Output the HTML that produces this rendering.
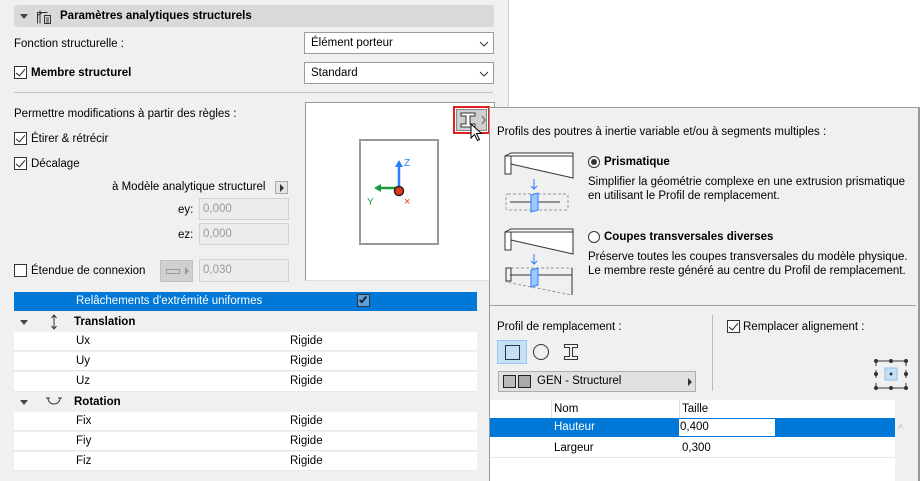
<!DOCTYPE html>
<html><head><meta charset="utf-8"><style>
*{margin:0;padding:0;box-sizing:border-box}
body{width:920px;height:481px;overflow:hidden;background:#fff;font-family:"Liberation Sans",sans-serif;font-size:11.5px;line-height:17px;color:#000;position:relative}
.a{position:absolute;white-space:nowrap}
.cb{position:absolute;width:13px;height:13px;border:1px solid #333;background:#fff}
.cb.on::after{content:"";position:absolute;left:3px;top:0px;width:4px;height:8px;border:solid #222;border-width:0 1.5px 1.5px 0;transform:rotate(40deg)}
.dd{position:absolute;background:#fff;border:1px solid #9a9a9a}
.fld{position:absolute;background:#ececec;border:1px solid #d2d2d2;color:#9a9a9a;padding:2px 3px}
.row{position:absolute;left:14px;width:463px;height:19px;background:#fff;border-bottom:1px solid #e8e8e8}
.b{font-weight:bold}
</style></head><body>
<div class="a" style="left:0;top:0;width:509px;height:481px;background:#f0f0f0;border-right:1px solid #d0d0d0"></div>
<div class="a" style="left:14px;top:5px;width:480px;height:22px;background:#d9d9d9;border-radius:3px"></div>
<div class="a" style="left:20px;top:14px;width:0;height:0;border-left:4px solid transparent;border-right:4px solid transparent;border-top:5px solid #444"></div>
<svg class="a" style="left:36px;top:9px" width="16" height="16" viewBox="0 0 16 16" fill="none" stroke="#333" stroke-width="1"><path d="M1.5 3.5h10M1.5 3.5v11M4 1.5v13M1.5 6.5l5-3M8.5 6.5h6v8h-6z M10 9h3M10 11h3M10 13h3"/></svg>
<div class="a b" style="left:60px;top:8px">Paramètres analytiques structurels</div>
<div class="a" style="left:14px;top:36px">Fonction structurelle :</div>
<div class="dd" style="left:304px;top:32px;width:190px;height:22px"><span class="a" style="left:6px;top:2px">Élément porteur</span><svg class="a" style="right:4px;top:8px" width="10" height="6"><path d="M1 1l4 4 4-4" stroke="#333" fill="none"/></svg></div>
<div class="cb on" style="left:14px;top:66px"></div>
<div class="a b" style="left:31px;top:65px">Membre structurel</div>
<div class="dd" style="left:304px;top:62px;width:190px;height:22px"><span class="a" style="left:6px;top:2px">Standard</span><svg class="a" style="right:4px;top:8px" width="10" height="6"><path d="M1 1l4 4 4-4" stroke="#333" fill="none"/></svg></div>
<div class="a" style="left:14px;top:92px;width:479px;height:1px;background:#c4c4c4"></div>
<div class="a" style="left:14px;top:106px">Permettre modifications à partir des règles :</div>
<div class="cb on" style="left:14px;top:132px"></div><div class="a" style="left:31px;top:131px">Étirer &amp; rétrécir</div>
<div class="cb on" style="left:14px;top:157px"></div><div class="a" style="left:31px;top:156px">Décalage</div>
<div class="a" style="left:112px;top:179px">à Modèle analytique structurel</div>
<div class="a" style="left:275px;top:181px;width:13px;height:13px;border:1px solid #aaa;background:#e4e4e4"><div class="a" style="left:4px;top:2px;border-top:4px solid transparent;border-bottom:4px solid transparent;border-left:4px solid #333"></div></div>
<div class="a" style="left:178px;top:202px">ey:</div><div class="fld" style="left:199px;top:198px;width:90px;height:22px">0,000</div>
<div class="a" style="left:178px;top:227px">ez:</div><div class="fld" style="left:199px;top:223px;width:90px;height:22px">0,000</div>
<div class="cb" style="left:14px;top:264px"></div><div class="a" style="left:31px;top:263px">Étendue de connexion</div>
<div class="a" style="left:160px;top:260px;width:33px;height:22px;background:#d0d0d0;border:1px solid #c0c0c0"><div class="a" style="left:5px;top:8px;width:14px;height:5px;border:1px solid #999"></div><div class="a" style="left:24px;top:6px;border-top:4px solid transparent;border-bottom:4px solid transparent;border-left:4px solid #999"></div></div>
<div class="fld" style="left:199px;top:259px;width:90px;height:23px">0,030</div>
<div class="a" style="left:305px;top:102px;width:190px;height:179px;background:#fff;border:1px solid #9a9a9a;border-bottom-color:#e0e0e0"></div>
<div class="a" style="left:359px;top:139px;width:80px;height:106px;border:2px solid #999;background:#fff"></div>
<svg class="a" style="left:365px;top:155px" width="50" height="52"><path d="M34 33V10" stroke="#2a7bff" stroke-width="2.5"/><path d="M30 12l4-7 4 7z" fill="#2a7bff"/><path d="M34 33H15" stroke="#1a9a3a" stroke-width="2.5"/><path d="M16 29l-7 4 7 4z" fill="#1a9a3a"/><circle cx="34" cy="36" r="4.5" fill="#e8391f" stroke="#222" stroke-width="1.5"/><text x="39" y="11" font-size="10" fill="#2a7bff" font-family="Liberation Sans">Z</text><text x="2" y="50" font-size="10" fill="#1a9a3a" font-family="Liberation Sans">Y</text><text x="39" y="50" font-size="11" fill="#e8391f" font-family="Liberation Sans">×</text></svg>
<div class="a" style="left:453px;top:106px;width:37px;height:28px;border:2px solid #e0201e"></div>
<div class="a" style="left:456px;top:109px;width:31px;height:22px;background:#cfcfcf;border:1px solid #888"></div>
<svg class="a" style="left:459px;top:111px" width="28" height="18"><path d="M2 2h14v3h-5v8h5v3H2v-3h5V5H2z" fill="#fff" stroke="#333"/><path d="M23 5l3 4-3 4" stroke="#555" fill="none"/></svg>
<svg class="a" style="left:470px;top:123px" width="14" height="20"><path d="M1 1v14l3.5-3.5 3 6 2-1-3-6h5z" fill="#fff" stroke="#000"/></svg>
<div class="a" style="left:14px;top:292px;width:463px;height:19px;background:#0078d7"></div>
<div class="a" style="left:76px;top:293px;color:#fff">Relâchements d'extrémité uniformes</div>
<div class="a" style="left:357px;top:294px;width:13px;height:13px;border:1px solid #333;background:#5aa0e0"><div class="a" style="left:3px;top:0;width:4px;height:8px;border:solid #222;border-width:0 2px 2px 0;transform:rotate(40deg)"></div></div>
<div class="a" style="left:14px;top:311px;width:463px;height:21px;background:#f0f0f0"></div>
<div class="a" style="left:20px;top:320px;border-left:4px solid transparent;border-right:4px solid transparent;border-top:5px solid #444"></div>
<svg class="a" style="left:50px;top:314px" width="8" height="16"><path d="M4 1v14M1.5 4L4 1l2.5 3M1.5 12L4 15l2.5-3" stroke="#333" fill="none"/></svg>
<div class="a b" style="left:74px;top:314px">Translation</div>
<div class="row" style="top:332px"><span class="a" style="left:62px;top:1px">Ux</span><span class="a" style="left:276px;top:1px">Rigide</span></div>
<div class="row" style="top:352px"><span class="a" style="left:62px;top:1px">Uy</span><span class="a" style="left:276px;top:1px">Rigide</span></div>
<div class="row" style="top:372px;height:20px"><span class="a" style="left:62px;top:1px">Uz</span><span class="a" style="left:276px;top:1px">Rigide</span></div>
<div class="a" style="left:20px;top:400px;border-left:4px solid transparent;border-right:4px solid transparent;border-top:5px solid #444"></div>
<svg class="a" style="left:45px;top:395px" width="18" height="12"><path d="M3 3a6 6 0 1 0 12 0" stroke="#333" fill="none"/><path d="M1 3h4M13 3h4" stroke="#333"/></svg>
<div class="a b" style="left:74px;top:394px">Rotation</div>
<div class="row" style="top:412px"><span class="a" style="left:62px;top:1px">Fix</span><span class="a" style="left:276px;top:1px">Rigide</span></div>
<div class="row" style="top:432px"><span class="a" style="left:62px;top:1px">Fiy</span><span class="a" style="left:276px;top:1px">Rigide</span></div>
<div class="row" style="top:452px"><span class="a" style="left:62px;top:1px">Fiz</span><span class="a" style="left:276px;top:1px">Rigide</span></div>
<!-- popup -->
<div class="a" style="left:489px;top:107px;width:431px;height:374px;background:#f0f0f0;border-left:1px solid #999;border-top:1px solid #999;border-right:2px solid #999"></div>
<div class="a" style="left:497px;top:124px">Profils des poutres à inertie variable et/ou à segments multiples :</div>
<svg class="a" style="left:503px;top:150px" width="72" height="145" fill="none" stroke="#333"><path d="M2 6l6-3h62v25L8 14v10H2z" fill="#fff"/><path d="M2 6h6v18M8 6h62"/><path d="M8 14v10"/><path d="M31 29v10M28 36l3 3 3-3" stroke="#2a7bff"/><rect x="3" y="44" width="62" height="16" rx="2" stroke="#999" stroke-dasharray="3 2"/><path d="M7 52h50"/><path d="M28 45l7-2v17l-7 2z" fill="#9cc8ff" stroke="#2a7bff"/><path d="M2 82l6-3h62v25L8 90v10H2z" fill="#fff"/><path d="M2 82h6v18M8 82h62"/><path d="M31 104v10M28 111l3 3 3-3" stroke="#2a7bff"/><path d="M3 118h66v27L3 132z" stroke="#999" stroke-dasharray="3 2"/><path d="M3 118v13h5v-13zM69 118v27"/><path d="M7 125h62"/><path d="M28 120l7-2v17l-7 2z" fill="#9cc8ff" stroke="#2a7bff"/></svg>
<div class="a" style="left:588px;top:156px;width:12px;height:12px;border:1px solid #333;border-radius:50%;background:#fff"><div class="a" style="left:2px;top:2px;width:6px;height:6px;border-radius:50%;background:#333"></div></div>
<div class="a b" style="left:604px;top:154px">Prismatique</div>
<div class="a" style="left:588px;top:175px;line-height:14px">Simplifier la géométrie complexe en une extrusion prismatique<br>en utilisant le Profil de remplacement.</div>
<div class="a" style="left:588px;top:231px;width:12px;height:12px;border:1px solid #333;border-radius:50%;background:#fff"></div>
<div class="a b" style="left:604px;top:229px">Coupes transversales diverses</div>
<div class="a" style="left:588px;top:250px;line-height:14px">Préserve toutes les coupes transversales du modèle physique.<br>Le membre reste généré au centre du Profil de remplacement.</div>
<div class="a" style="left:490px;top:305px;width:426px;height:1px;background:#a0a0a0"></div>
<div class="a" style="left:497px;top:319px">Profil de remplacement :</div>
<div class="a" style="left:712px;top:315px;width:1px;height:76px;background:#bbb"></div>
<div class="cb on" style="left:727px;top:320px"></div><div class="a" style="left:743px;top:319px">Remplacer alignement :</div>
<div class="a" style="left:497px;top:340px;width:30px;height:24px;background:#c5dff5;border:1px solid #99c7ee"><div class="a" style="left:7px;top:4px;width:15px;height:15px;border:1.3px solid #333"></div></div>
<div class="a" style="left:533px;top:344px;width:16px;height:16px;border:1.3px solid #333;border-radius:50%"></div>
<svg class="a" style="left:563px;top:343px" width="16" height="18"><path d="M1.5 1.5h13v3h-5v9h5v3h-13v-3h5v-9h-5z" fill="none" stroke="#333"/></svg>
<div class="a" style="left:498px;top:371px;width:198px;height:21px;background:#e1e1e1;border:1px solid #adadad"><div class="a" style="left:4px;top:3px;width:13px;height:13px;border:1px solid #222;background:#bbb"></div><div class="a" style="left:19px;top:3px;width:13px;height:13px;border:1px solid #222;background:#aaa"></div><span class="a" style="left:38px;top:1px">GEN - Structurel</span><div class="a" style="left:189px;top:6px;border-top:4px solid transparent;border-bottom:4px solid transparent;border-left:4px solid #333"></div></div>
<svg class="a" style="left:873px;top:358px" width="36" height="32"><g stroke="#333" fill="#333"><path d="M3 3h30M3 3v5M33 3v5M3 30h30M3 30v-5M33 30v-5M3 16v-4M3 16v4M33 16v-4M33 16v4"/><circle cx="3" cy="3" r="1.5"/><circle cx="18" cy="3" r="1.5"/><circle cx="33" cy="3" r="1.5"/><circle cx="3" cy="16" r="1.5"/><circle cx="33" cy="16" r="1.5"/><circle cx="3" cy="30" r="1.5"/><circle cx="18" cy="30" r="1.5"/><circle cx="33" cy="30" r="1.5"/></g><rect x="12" y="10" width="12" height="12" fill="#c5dff5" stroke="#8fc0ec"/><circle cx="18" cy="16" r="1.5" fill="#333"/></svg>
<div class="a" style="left:490px;top:400px;width:405px;height:81px;background:#fff"></div>
<div class="a" style="left:551px;top:400px;width:1px;height:18px;background:#e0e0e0"></div>
<div class="a" style="left:679px;top:400px;width:1px;height:18px;background:#e0e0e0"></div>
<div class="a" style="left:554px;top:401px">Nom</div><div class="a" style="left:682px;top:401px">Taille</div>
<div class="a" style="left:490px;top:418px;width:405px;height:19px;background:#0078d7"></div>
<div class="a" style="left:554px;top:419px;color:#fff">Hauteur</div>
<div class="a" style="left:679px;top:419px;width:96px;height:17px;background:#fff;padding:0 1px">0,400</div>
<div class="a" style="left:490px;top:457px;width:405px;height:1px;background:#e8e8e8"></div>
<div class="a" style="left:554px;top:440px">Largeur</div><div class="a" style="left:682px;top:440px">0,300</div>
<div class="a" style="left:898px;top:421px;color:#bbb;font-size:11px">^</div>
</body></html>
